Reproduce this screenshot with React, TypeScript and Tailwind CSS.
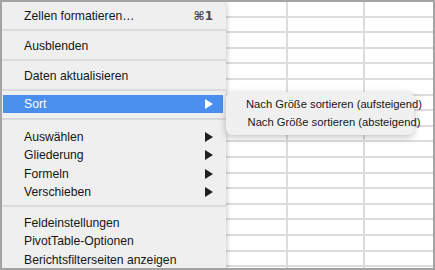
import React from "react";

function Arrow({ white }: { white?: boolean }) {
  return (
    <svg width="8" height="10" viewBox="0 0 8 10" className="shrink-0">
      <polygon points="0,0 8,5 0,10" fill={white ? "#ffffff" : "#1f1f1f"} />
    </svg>
  );
}

function Sep({ mt, mb }: { mt: string; mb: string }) {
  return <div className={`h-[2px] bg-[#dadada] ${mt} ${mb}`} />;
}

function Item({ label, arrow, h = "h-[18px]" }: { label: string; arrow?: boolean; h?: string }) {
  return (
    <div className={`${h} flex items-center justify-between pl-[22px] pr-[13px] text-[#161616]`}>
      <span>{label}</span>
      {arrow && <Arrow />}
    </div>
  );
}

export default function App() {
  const rows = Array.from({ length: 18 });
  return (
    <div
      className="w-[435px] h-[270px] bg-[#a3a3a3] p-[2px] overflow-hidden"
      style={{ fontFamily: '"Liberation Sans", Arial, "DejaVu Sans", sans-serif' }}
    >
      <div className="relative w-full h-full bg-white overflow-hidden">
        {/* spreadsheet grid */}
        <div className="flex flex-col">
          {rows.map((_, i) => (
            <div key={i} className="grid grid-cols-[286px_76.7px_1fr] h-[15.6px] shrink-0">
              <div className="border-b-2 border-r-2 border-[#dcdcdc]" />
              <div className="border-b-2 border-r-2 border-[#dcdcdc]" />
              <div className="border-b-2 border-[#dcdcdc]" />
            </div>
          ))}
        </div>

        {/* context menu */}
        <div className="absolute left-0 top-0 w-[224px] h-[280px] bg-[#efefef] rounded-tr-[5px] shadow-[1px_0_5px_rgba(0,0,0,0.22)] text-[12.2px] pt-[5px]">
          <div className="h-[18px] flex items-center justify-between pl-[22px] pr-[13px] text-[#161616]">
            <span>Zellen formatieren…</span>
            <span className="text-[#4a4a4a] font-bold text-[12px]" style={{ fontFamily: '"DejaVu Sans", sans-serif' }}>⌘1</span>
          </div>
          <Sep mt="mt-[4px]" mb="mb-[6px]" />
          <Item label="Ausblenden" />
          <Sep mt="mt-[4px]" mb="mb-[6px]" />
          <Item label="Daten aktualisieren" />
          <Sep mt="mt-[4px]" mb="mb-[4px]" />
          <div className="h-[18px] ml-[1px] mr-[3px] bg-[#4a8fee] flex items-center justify-between pl-[21px] pr-[10px] text-white">
            <span>Sort</span>
            <Arrow white />
          </div>
          <Sep mt="mt-[5px]" mb="mb-[8px]" />
          <Item label="Auswählen" arrow h="h-[18.3px]" />
          <Item label="Gliederung" arrow h="h-[18.3px]" />
          <Item label="Formeln" arrow h="h-[18.3px]" />
          <Item label="Verschieben" arrow h="h-[18.3px]" />
          <Sep mt="mt-[4px]" mb="mb-[7px]" />
          <Item label="Feldeinstellungen" h="h-[18.3px]" />
          <Item label="PivotTable-Optionen" h="h-[18.3px]" />
          <Item label="Berichtsfilterseiten anzeigen" h="h-[18.3px]" />
        </div>

        {/* submenu */}
        <div className="absolute left-[224px] top-[90px] w-[188px] h-[43px] bg-[#f0f0f0] rounded-[6px] shadow-[0_2px_7px_rgba(0,0,0,0.25)] pt-[4px] text-[11.2px] text-[#161616]">
          <div className="w-[216px] text-center leading-[17.7px] whitespace-nowrap">
            <div>Nach Größe sortieren (aufsteigend)</div>
            <div>Nach Größe sortieren (absteigend)</div>
          </div>
        </div>
      </div>
    </div>
  );
}
